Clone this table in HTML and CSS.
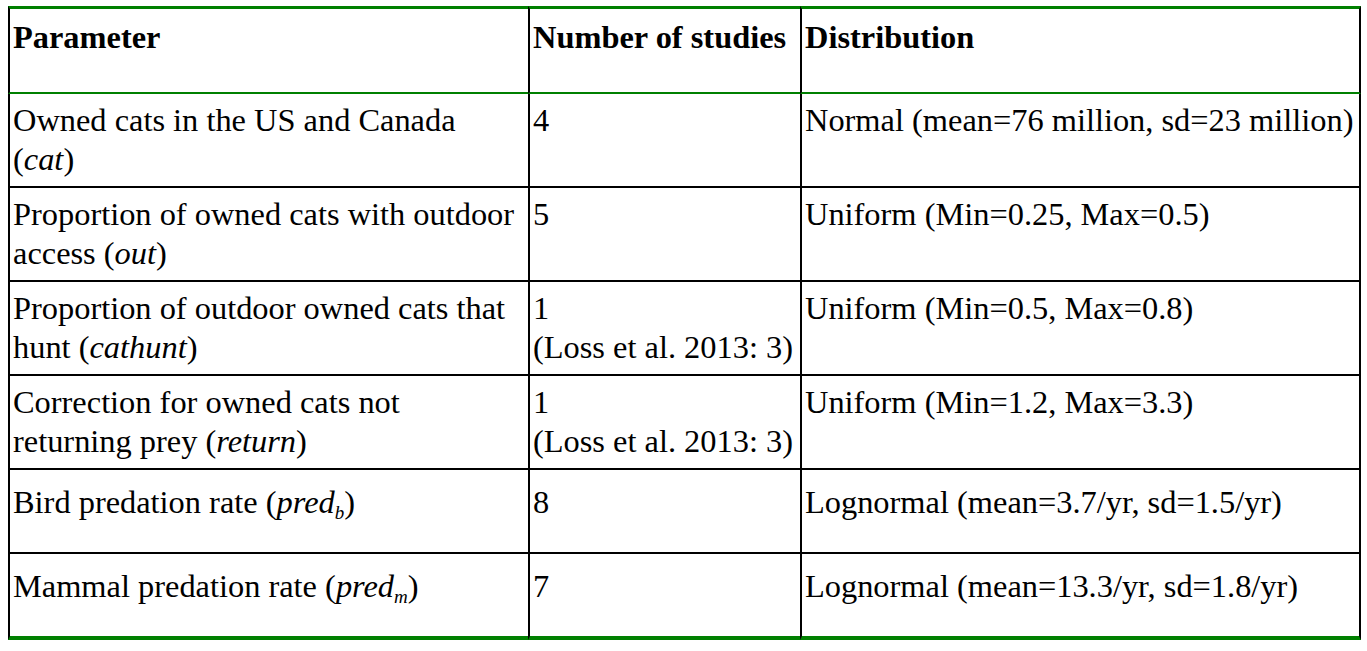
FILE: index.html
```html
<!DOCTYPE html>
<html>
<head>
<meta charset="utf-8">
<link rel="stylesheet" href="styles.css">
</head>
<body>
<table class="params">
  <colgroup>
    <col class="c-param">
    <col class="c-num">
    <col class="c-dist">
  </colgroup>
  <thead>
    <tr class="head">
      <th>Parameter</th>
      <th>Number of studies</th>
      <th class="last">Distribution</th>
    </tr>
  </thead>
  <tbody>
    <tr class="tall">
      <td>Owned cats in the US and Canada (<em>cat</em>)</td>
      <td>4</td>
      <td class="last">Normal (mean=76 million, sd=23 million)</td>
    </tr>
    <tr class="tall">
      <td>Proportion of owned cats with outdoor access (<em>out</em>)</td>
      <td>5</td>
      <td class="last">Uniform (Min=0.25, Max=0.5)</td>
    </tr>
    <tr class="tall">
      <td>Proportion of outdoor owned cats that hunt (<em>cathunt</em>)</td>
      <td>1<br>(Loss et al. 2013: 3)</td>
      <td class="last">Uniform (Min=0.5, Max=0.8)</td>
    </tr>
    <tr class="tall">
      <td>Correction for owned cats not returning prey (<em>return</em>)</td>
      <td>1<br>(Loss et al. 2013: 3)</td>
      <td class="last">Uniform (Min=1.2, Max=3.3)</td>
    </tr>
    <tr class="short">
      <td>Bird predation rate (<em>pred<sub>b</sub></em>)</td>
      <td>8</td>
      <td class="last">Lognormal (mean=3.7/yr, sd=1.5/yr)</td>
    </tr>
    <tr class="short final">
      <td>Mammal predation rate (<em>pred<sub>m</sub></em>)</td>
      <td>7</td>
      <td class="last">Lognormal (mean=13.3/yr, sd=1.8/yr)</td>
    </tr>
  </tbody>
</table>
</body>
</html>
```

FILE: styles.css
```css
html, body {
  margin: 0;
  padding: 0;
  background: #ffffff;
}

.params {
  margin: 6px 0 0 8px;
  width: 1353px;
  table-layout: fixed;
  border-collapse: separate;
  border-spacing: 0;
  font-family: "Liberation Serif", "Times New Roman", serif;
  font-size: 32.4px;
  line-height: 39px;
  color: #000000;
}

.c-param { width: 520px; }
.c-num { width: 272px; }
.c-dist { width: 561px; }

.params th,
.params td {
  text-align: left;
  vertical-align: top;
  border-left: 2px solid #000000;
  padding: 7px 12px 0 3px;
}

.params .last {
  border-right: 2px solid #000000;
  white-space: nowrap;
}

.params th {
  font-weight: bold;
  border-top: 3px solid #008000;
  border-bottom: 2px solid #008000;
  padding-top: 9px;
}

.params td {
  border-bottom: 2px solid #000000;
}

.params td:nth-child(2) {
  padding-right: 2px;
  white-space: nowrap;
}

.head { height: 88px; }
.tall { height: 94px; }
.short { height: 84px; }
.short td { padding-top: 13px; }

.params .final td {
  border-bottom: 4px solid #008000;
}
.final { height: 86px; }

.params em {
  font-style: italic;
}

.params sub {
  font-size: 19px;
  line-height: 1;
  vertical-align: -6px;
}
```
